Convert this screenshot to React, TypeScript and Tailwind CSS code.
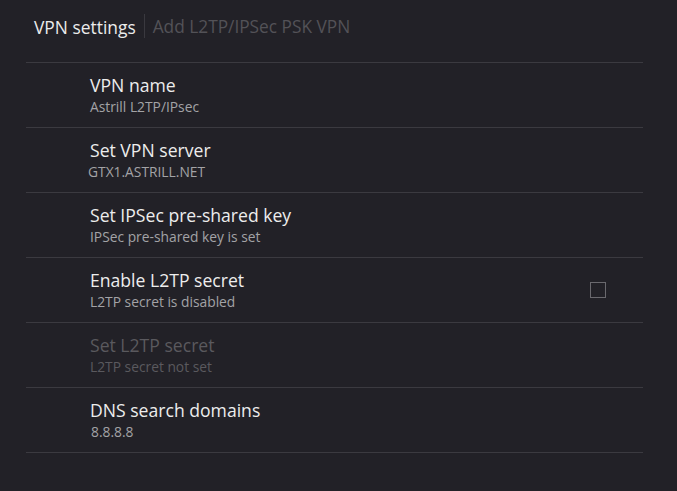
import React from "react";

const rows = [
  { title: "VPN name", sub: "Astrill L2TP/IPsec", subCls: "" },
  { title: "Set VPN server", sub: "GTX1.ASTRILL.NET", subCls: "-ml-[2px]" },
  { title: "Set IPSec pre-shared key", sub: "IPSec pre-shared key is set", subCls: "" },
  { title: "Enable L2TP secret", sub: "L2TP secret is disabled", subCls: "", check: true },
  { title: "Set L2TP secret", sub: "L2TP secret not set", subCls: "", disabled: true },
  { title: "DNS search domains", sub: "8.8.8.8", subCls: "ml-[1px]" },
];

export default function App() {
  return (
    <div
      className="w-[677px] h-[491px] bg-[#222127] overflow-hidden"
      style={{ fontFamily: '"Open Sans", "Noto Sans", sans-serif' }}
    >
      <div className="h-[62px] flex items-start pt-[14px] pl-[34px]">
        <span className="text-[17.4px] leading-[26px] text-[#ececec]">VPN settings</span>
        <span className="ml-[8px] w-px h-[24px] bg-[#3a393f]" />
        <span className="ml-[8px] text-[17.3px] leading-[26px] text-[#535257]">
          Add L2TP/IPSec PSK VPN
        </span>
      </div>
      <div className="mx-[26px] w-[617px]">
        <div className="h-px bg-[#3b3a40]" />
        {rows.map((r) => (
          <div key={r.title}>
            <div className="h-[64px] flex items-start pt-[10px] pl-[64px] pr-[37px]">
              <div className="flex-1 flex flex-col">
                <span
                  className={`text-[17.6px] leading-[24px] ${
                    r.disabled ? "text-[#5a595e]" : "text-[#ededed]"
                  }`}
                >
                  {r.title}
                </span>
                <span
                  className={`text-[13.8px] leading-[19px] ${r.subCls} ${
                    r.disabled ? "text-[#5a595e]" : "text-[#a3a3a6]"
                  }`}
                >
                  {r.sub}
                </span>
              </div>
              {r.check && (
                <div className="w-[16px] h-[16px] border border-[#6a696e] mt-[14px]" />
              )}
            </div>
            <div className="h-px bg-[#3b3a40]" />
          </div>
        ))}
      </div>
    </div>
  );
}
